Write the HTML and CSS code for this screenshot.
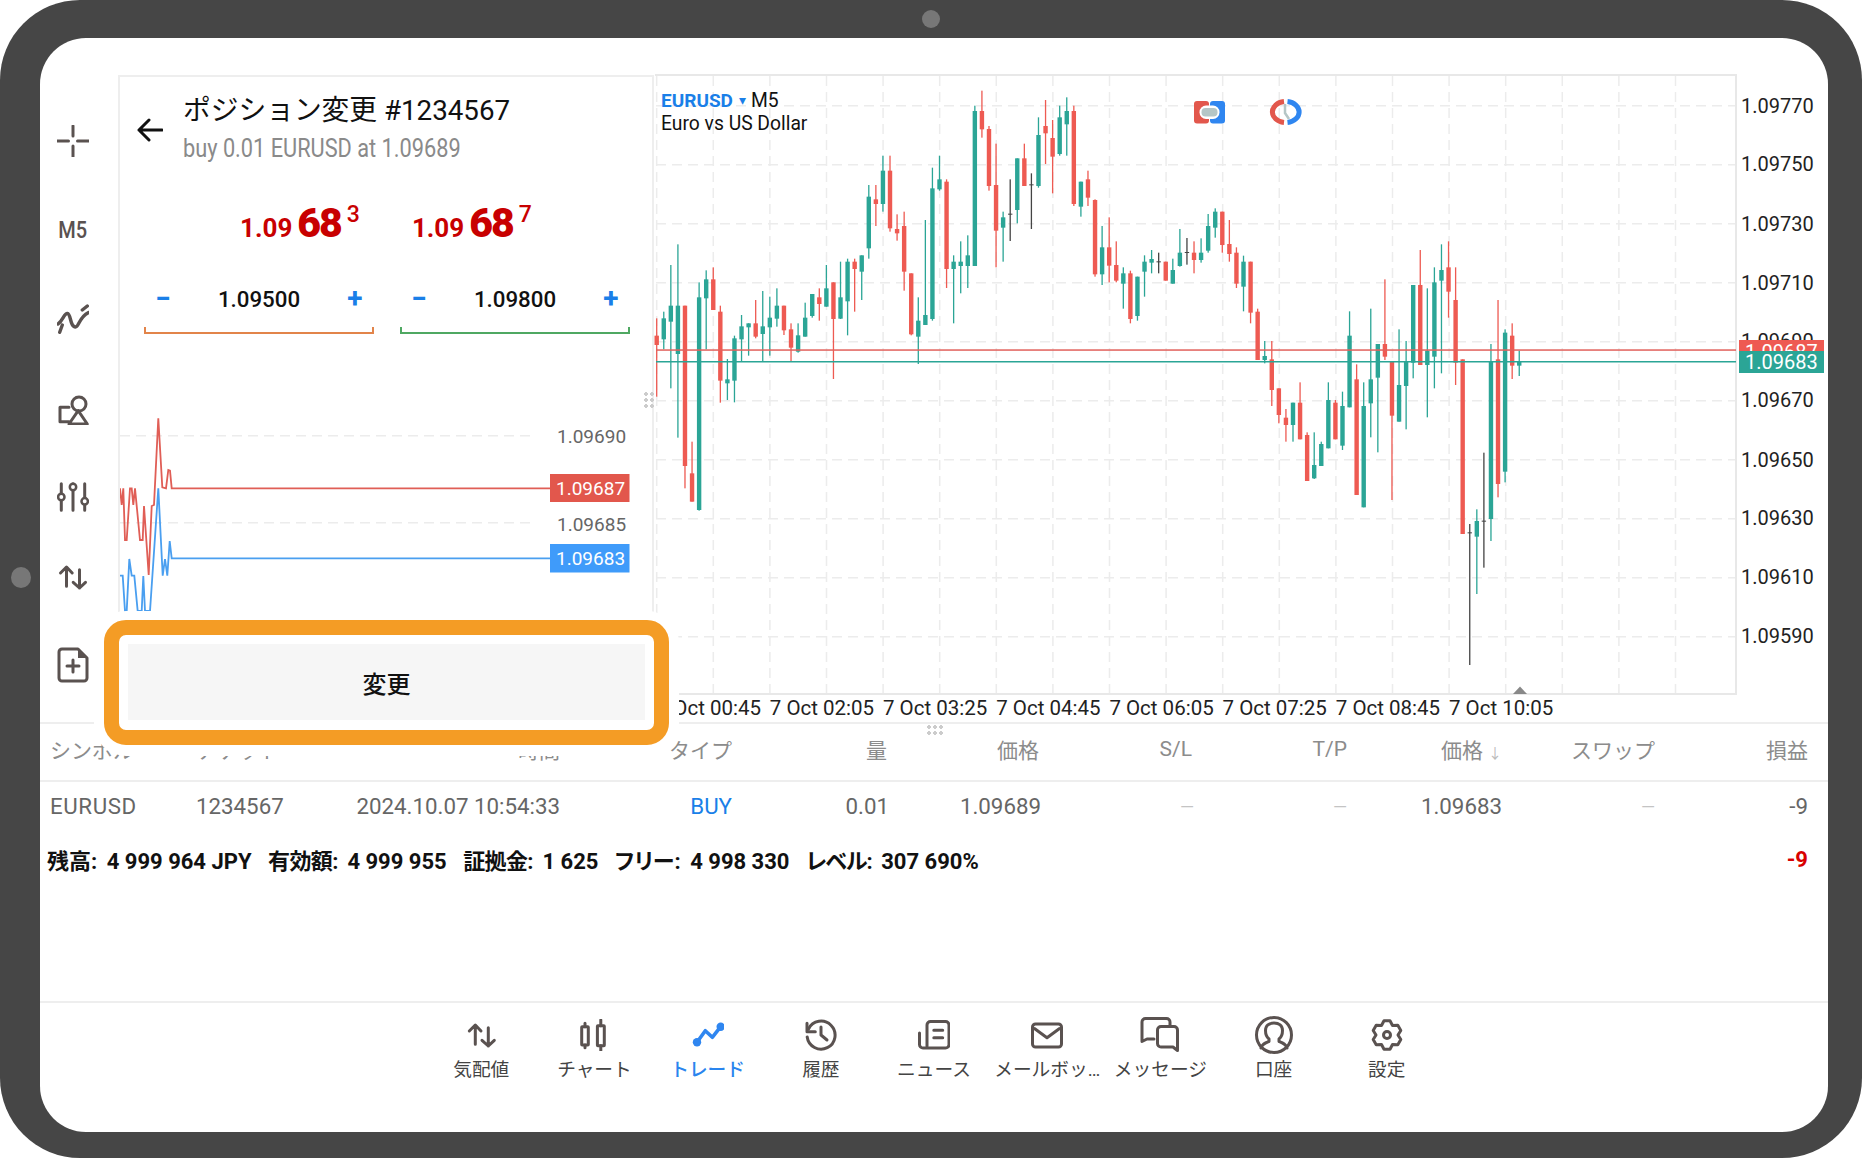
FILE: index.html
```html
<!DOCTYPE html>
<html lang="ja">
  <head>
    <meta charset="UTF-8" />
    <meta name="viewport" content="width=device-width, initial-scale=1.0" />
    <title>ポジション変更</title>
    <link rel="stylesheet" href="styles.css">
  </head>
  <body>
    <div class="tablet">
      <span class="camera"></span>
      <span class="side-dot"></span>

      <div class="screen">
        <div class="workspace">
          <nav class="rail">
            <svg class="icon" viewBox="0 0 32 32">
              <path d="M0.5 16H11.5M20.5 16H32M16 1V11M16 21V31.5" />
            </svg>
            <span class="rail-label">M5</span>
            <svg class="icon icon-bold" viewBox="0 0 32 32">
              <path d="M1 21C6 18 7 10 10.5 10.5C14 11 13 24 18.5 24C22 24 22 14 31.5 9.5M30.3 3L25.3 7M5.3 22L2.7 29.3" />
            </svg>
            <svg class="icon" viewBox="0 0 32 32">
              <circle cx="22" cy="11" r="7" />
              <path class="paper" d="M12 31H30.3L21.2 17.7Z" />
              <path d="M12 14.3H3V28.7H12" />
            </svg>
            <svg class="icon" viewBox="0 0 32 32">
              <path d="M4.3 2.7V29.3M16 2.7V29.3M27.7 2.7V29.3" />
              <circle class="knob" cx="4.3" cy="16" r="3.2" />
              <circle class="knob" cx="16" cy="6" r="3.2" />
              <circle class="knob" cx="27.7" cy="20.3" r="3.2" />
            </svg>
            <svg class="icon" viewBox="0 0 32 32">
              <path d="M9.5 25.3V7M3.5 12L9.5 6L15.2 12M22.5 8.7V27M16.2 21.3L22.5 27L28.5 21.3" />
            </svg>
            <svg class="icon icon-tall" viewBox="0 0 32 36">
              <path d="M5 2H21L30 11V31A3 3 0 0 1 27 34H5A3 3 0 0 1 2 31V5A3 3 0 0 1 5 2Z" />
              <path class="solid" d="M21 2V11H30Z" />
              <path d="M16 13V25M10 19H22" />
            </svg>
          </nav>

          <section class="panel">
            <header class="panel-head">
              <svg class="back" viewBox="0 0 26 24">
                <path d="M25 12H2M12 2L2 12L12 22" />
              </svg>
              <div>
                <h1 class="panel-title">ポジション変更 #1234567</h1>
                <p class="panel-sub">buy 0.01 EURUSD at 1.09689</p>
              </div>
            </header>

            <div class="quotes">
              <div class="quote"><span>1.09</span><b>68</b><sup>3</sup></div>
              <div class="quote"><span>1.09</span><b>68</b><sup>7</sup></div>
            </div>

            <div class="steppers">
              <div class="stepper">
                <div class="stepper-row"><span class="step">−</span><span>1.09500</span><span class="step">+</span></div>
                <div class="bracket bracket-sl"></div>
              </div>
              <div class="stepper">
                <div class="stepper-row"><span class="step">−</span><span>1.09800</span><span class="step">+</span></div>
                <div class="bracket bracket-tp"></div>
              </div>
            </div>

            <svg class="mini" viewBox="120 345 532 378">
              <path class="grid-line" d="M120 435.7H536M120 522.7H536" />
              <polyline class="tick-ask" points="118.3,505 120,488.3 121.7,505 123.3,488.3 125,540 126.7,540 130,488.3 131.7,488.3 133.3,505 135,488.3 140,540 142.7,540 144,506 148.7,575 151.7,506 154,505 158.3,418.3 162.3,487.3 166,488.3 168.3,470 170,470.7 171.7,488.3 550,488.3" />
              <polyline class="tick-bid" points="118.3,575.7 122.7,575.7 125,611 126.7,611 129.3,559 131.7,575.7 134.3,575.7 137.7,611 139.3,611 141.7,611 143.3,576 145,611 150,611 158.3,488.3 162.7,575.7 165,559 167.3,575.7 169.7,541 171.7,558.3 550,558.3" />
              <text class="mini-price" x="557" y="443">1.09690</text>
              <text class="mini-price" x="557" y="530.5">1.09685</text>
              <rect class="tag-ask" x="550" y="474" width="79.5" height="28" />
              <text class="mini-tag" x="556" y="495">1.09687</text>
              <rect class="tag-bid" x="550" y="544" width="79.5" height="28.5" />
              <text class="mini-tag" x="556" y="565">1.09683</text>
            </svg>
          </section>

          <svg id="chart" class="chart" viewBox="654 38 1174 685">
            <g id="grid" class="grid-line"></g>
            <path class="chart-frame" d="M655 75H1736V694H656" />
            <g id="candles"></g>

            <text class="sym" x="661" y="107">EURUSD</text>
            <text class="sym-caret" x="738.5" y="105">▾</text>
            <text class="chart-text" x="751" y="107">M5</text>
            <text class="chart-text" x="661" y="130">Euro vs US Dollar</text>

            <rect x="1194" y="101" width="15" height="22.5" rx="3" fill="#e2574c" />
            <rect x="1210" y="101" width="15" height="22.5" rx="3" fill="#2f86f0" />
            <rect x="1199.5" y="105.5" width="20" height="13.5" rx="6.5" fill="#fff" />
            <rect x="1201.5" y="108" width="16" height="8.5" rx="4" fill="#b5c6c6" />

            <path class="ring-red" d="M1284 101.6A13.5 10.5 0 0 0 1284 122.4" />
            <path class="ring-blue" d="M1287.5 101.6A13.5 10.5 0 0 1 1287.5 122.4" />
            <path class="ring-hand" d="M1285 104V113L1289 119" />

            <path class="axis-mark" d="M1513 694L1520 686.5L1527 694Z" />

            <text class="axis" x="1741" y="113">1.09770</text>
            <text class="axis" x="1741" y="171">1.09750</text>
            <text class="axis" x="1741" y="230.5">1.09730</text>
            <text class="axis" x="1741" y="289.5">1.09710</text>
            <text class="axis" x="1741" y="348">1.09690</text>
            <text class="axis" x="1741" y="407">1.09670</text>
            <text class="axis" x="1741" y="466.5">1.09650</text>
            <text class="axis" x="1741" y="525">1.09630</text>
            <text class="axis" x="1741" y="584">1.09610</text>
            <text class="axis" x="1741" y="642.5">1.09590</text>

            <rect x="1739" y="340" width="85" height="12" fill="#ee5a52" />
            <text class="axis-tag" x="1745" y="358.5">1.09687</text>
            <rect x="1739" y="351" width="85" height="22" fill="#2ba596" />
            <text class="axis-tag" x="1745" y="369">1.09683</text>

            <text class="time" x="656.7" y="715">7 Oct 00:45</text>
            <text class="time" x="769.8" y="715">7 Oct 02:05</text>
            <text class="time" x="883" y="715">7 Oct 03:25</text>
            <text class="time" x="996.2" y="715">7 Oct 04:45</text>
            <text class="time" x="1109.4" y="715">7 Oct 06:05</text>
            <text class="time" x="1222.6" y="715">7 Oct 07:25</text>
            <text class="time" x="1335.8" y="715">7 Oct 08:45</text>
            <text class="time" x="1449" y="715">7 Oct 10:05</text>
          </svg>
        </div>

        <section class="positions">
          <div class="cols cols-head">
            <span>シンボル</span>
            <span>チケット</span>
            <span>時間</span>
            <span>タイプ</span>
            <span>量</span>
            <span>価格</span>
            <span>S/L</span>
            <span>T/P</span>
            <span>価格<i class="sort">↓</i></span>
            <span>スワップ</span>
            <span>損益</span>
          </div>
          <div class="cols cols-row">
            <span class="sym-cell">EURUSD</span>
            <span>1234567</span>
            <span>2024.10.07 10:54:33</span>
            <span class="buy">BUY</span>
            <span>0.01</span>
            <span>1.09689</span>
            <span class="empty">—</span>
            <span class="empty">—</span>
            <span>1.09683</span>
            <span class="empty">—</span>
            <span>-9</span>
          </div>
          <div class="account">
            <span class="acc"><em>残高:</em>4 999 964 JPY</span>
            <span class="acc acc-tight"><em>有効額:</em>4 999 955</span>
            <span class="acc acc-tight"><em>証拠金:</em>1 625</span>
            <span class="acc"><em>フリー:</em>4 998 330</span>
            <span class="acc acc-tighter"><em>レベル:</em>307 690%</span>
            <span class="total">-9</span>
          </div>
        </section>

        <nav class="tabs">
          <a class="tab">
            <svg class="icon" viewBox="0 0 32 32">
              <path d="M10.3 25.3V7M4.3 12L10.3 6L16 12M23.3 8.7V27M17 21.3L23.3 27L29.3 21.3" />
            </svg>
            <span>気配値</span>
          </a>
          <a class="tab">
            <svg class="icon" viewBox="0 0 32 32">
              <rect x="3.7" y="7.7" width="6.6" height="18.3" rx="0.5" />
              <rect x="19.4" y="6.7" width="6.9" height="20" rx="0.5" />
              <path d="M7 4.3V7.7M7 26V28.7M22.8 1V6.7M22.8 26.7V31.7" />
            </svg>
            <span>チャート</span>
          </a>
          <a class="tab tab-active">
            <svg class="icon" viewBox="0 0 32 32">
              <path d="M5 23.3L13.3 11.7L20.3 18.3L28.7 7.7" />
              <circle class="solid" cx="5" cy="23.3" r="4.2" />
              <circle class="solid" cx="28.7" cy="7.7" r="4.2" />
            </svg>
            <span>トレード</span>
          </a>
          <a class="tab">
            <svg class="icon" viewBox="0 0 32 32">
              <path d="M3.5 10A14 14 0 1 1 2.2 18" />
              <path d="M2 4.3V12.7H10.3" />
              <path d="M16 8V16L22 21" />
            </svg>
            <span>履歴</span>
          </a>
          <a class="tab">
            <svg class="icon" viewBox="0 0 32 32">
              <path d="M9 27V6A3.5 3.5 0 0 1 12.5 2.5H27.5A3.5 3.5 0 0 1 31 6V25.5A3.5 3.5 0 0 1 27.5 29H5A3.5 3.5 0 0 1 1.5 25.5V14" />
              <path d="M15.8 11.3H24.7M15.8 18.7H24.7" />
            </svg>
            <span>ニュース</span>
          </a>
          <a class="tab">
            <svg class="icon" viewBox="0 0 32 32">
              <rect x="1.5" y="5" width="29" height="23" rx="3" />
              <path d="M3.8 9.7L16 18.7L28.2 9.7" />
            </svg>
            <span>メールボッ…</span>
          </a>
          <a class="tab">
            <svg class="icon icon-wide" viewBox="0 0 40 40">
              <path d="M30 11V7A3.5 3.5 0 0 0 26.5 3.5H5.5A3.5 3.5 0 0 0 2 7V26.5L7 24H14" />
              <path d="M21 11.5H34A3.5 3.5 0 0 1 37.5 15V35.5L33 32H21A3.5 3.5 0 0 1 17.5 28.5V15A3.5 3.5 0 0 1 21 11.5Z" />
            </svg>
            <span>メッセージ</span>
          </a>
          <a class="tab">
            <svg class="icon icon-wide" viewBox="0 0 40 40">
              <circle cx="20" cy="20" r="17.5" />
              <path d="M7 33C8 29 11 28 15 26.5V24C12.5 22 11.5 19 11.5 15.5C11.5 10.5 15 8 20 8C25 8 28.5 10.5 28.5 15.5C28.5 19 27.5 22 25 24V26.5C29 28 32 29 33 33" />
            </svg>
            <span>口座</span>
          </a>
          <a class="tab">
            <svg class="icon" viewBox="0 0 32 32">
              <path d="M13 1.8H19L21.5 6.5L26.8 6.3L29.8 11.5L27 16L29.8 20.5L26.8 25.7L21.5 25.5L19 30.2H13L10.5 25.5L5.2 25.7L2.2 20.5L5 16L2.2 11.5L5.2 6.3L10.5 6.5Z" />
              <circle cx="16" cy="16" r="3.5" />
            </svg>
            <span>設定</span>
          </a>
        </nav>

        <span class="grip grip-v"></span>
        <span class="grip grip-h"></span>
      </div>

      <div class="highlight">
        <button class="modify" type="button">変更</button>
      </div>
    </div>

    <script src="chart.js"></script>
  </body>
</html>
```

FILE: styles.css
```css
* {
  box-sizing: border-box;
}
body {
  margin: 0;
  background: #fff;
  font-family: Roboto, "Noto Sans CJK JP", sans-serif;
  color: #111;
}
.tablet {
  position: relative;
  width: 1862px;
  height: 1158px;
  padding: 38px 34px 26px 40px;
  background: #464646;
  border-radius: 80px;
}
.camera {
  position: absolute;
  left: 922px;
  top: 10px;
  width: 18px;
  height: 18px;
  border-radius: 50%;
  background: #777;
}
.side-dot {
  position: absolute;
  left: 11px;
  top: 567px;
  width: 20px;
  height: 21px;
  border-radius: 50%;
  background: #777;
}
.screen {
  position: relative;
  display: flex;
  flex-direction: column;
  height: 1094px;
  background: #fff;
  border-radius: 46px;
  overflow: hidden;
}

/* top area: tool rail, order panel, chart */
.workspace {
  display: flex;
  height: 686px;
  flex: none;
  border-bottom: 2px solid #eee;
}
.rail {
  display: grid;
  grid-template-rows: 88px 90px 88px 92px 84px 76px 100px;
  justify-items: center;
  align-items: center;
  width: 78px;
  padding: 59px 13px 0 0;
  flex: none;
}
.rail-label {
  font-size: 23px;
  font-weight: 500;
  color: #5a5250;
  transform: scaleX(0.87);
}
.icon {
  display: block;
  width: 32px;
  height: 32px;
  fill: none;
  stroke: #5a5250;
  stroke-width: 3;
  stroke-linecap: round;
  stroke-linejoin: round;
}
.icon-bold {
  stroke-width: 3.4;
}
.icon-tall {
  height: 36px;
}
.icon-wide {
  width: 40px;
  height: 40px;
}
.knob {
  fill: #fff;
  stroke-width: 2.5;
}
.paper {
  fill: #fff;
}
.solid {
  fill: #5a5250;
  stroke: none;
}

.panel {
  width: 536px;
  flex: none;
  margin-top: 37px;
  border: 2px solid #eee;
  border-bottom: none;
}
.panel-head {
  display: flex;
  align-items: center;
  gap: 20px;
  padding: 15px 0 0 17px;
}
.back {
  width: 26px;
  height: 24px;
  fill: none;
  stroke: #111;
  stroke-width: 3;
  stroke-linecap: round;
  stroke-linejoin: round;
}
.panel-title {
  margin: 0;
  font-size: 28px;
  font-weight: 400;
  line-height: 38px;
  white-space: nowrap;
  transform: scaleX(0.99);
  transform-origin: left;
}
.panel-sub {
  margin: 0;
  font-size: 25px;
  line-height: 37px;
  color: #8a8a8a;
  white-space: nowrap;
  transform: scaleX(0.87);
  transform-origin: left;
}
.quotes {
  display: flex;
  gap: 52px;
  height: 50px;
  margin-top: 31px;
  padding-left: 120px;
  color: #c80000;
  font-weight: 700;
}
.quote {
  display: flex;
  align-items: baseline;
  line-height: 50px;
  font-size: 26px;
}
.quote b {
  margin-left: 5px;
  font-size: 41px;
  letter-spacing: -2px;
}
.quote sup {
  margin-left: 6px;
  font-size: 23px;
  font-weight: 500;
  line-height: 1;
  align-self: flex-start;
  margin-top: 5px;
}
.steppers {
  display: flex;
  gap: 26px;
  margin-top: 30px;
  margin-bottom: 11px;
  padding-left: 24px;
}
.stepper {
  width: 230px;
}
.stepper-row {
  display: flex;
  justify-content: space-between;
  align-items: center;
  height: 49px;
  padding: 0 10px 8px;
  font-size: 22.3px;
  font-weight: 500;
}
.step {
  width: 18px;
  text-align: center;
  font-size: 28px;
  font-weight: 700;
  color: #1a7fe8;
}
.bracket {
  height: 7px;
  border: 2px solid;
  border-top: none;
}
.bracket-sl {
  border-color: #e2844a;
}
.bracket-tp {
  border-color: #4fa862;
}

.mini {
  display: block;
  width: 532px;
  height: 378px;
}
.grid-line {
  fill: none;
  stroke: #ececec;
  stroke-width: 1.5;
  stroke-dasharray: 10 6;
}
.tick-ask,
.tick-bid {
  fill: none;
  stroke-width: 1.8;
}
.tick-ask {
  stroke: #e05e56;
}
.tick-bid {
  stroke: #4a9ff0;
}
.mini-price {
  font-size: 19px;
  fill: #666;
}
.mini-tag {
  font-size: 19px;
  fill: #fff;
}
.tag-ask {
  fill: #e2574c;
}
.tag-bid {
  fill: #3f9bfa;
}

.chart {
  display: block;
  width: 1174px;
  height: 685px;
  flex: none;
}
.chart-frame {
  fill: none;
  stroke: #e8e8e8;
  stroke-width: 2;
}
.sym {
  font-size: 19px;
  font-weight: 700;
  fill: #1a7fe8;
}
.sym-caret {
  font-size: 14px;
  fill: #1a7fe8;
}
.chart-text {
  font-size: 19.3px;
  fill: #111;
}
.ring-red,
.ring-blue {
  fill: none;
  stroke-width: 5;
}
.ring-red {
  stroke: #e2574c;
}
.ring-blue {
  stroke: #2f86f0;
}
.ring-hand {
  fill: none;
  stroke: #b5c6c6;
  stroke-width: 2.5;
}
.axis-mark {
  fill: #888;
}
.axis {
  font-size: 20px;
  fill: #222;
}
.axis-tag {
  font-size: 20px;
  fill: #fff;
}
.time {
  font-size: 20.5px;
  fill: #222;
}

/* positions table */
.positions {
  flex: none;
  height: 277px;
  font-size: 22.3px;
}
.cols {
  display: grid;
  grid-template-columns: 146px 120px 244px 172px 157px 152px 153px 153px 155px 153px 153px;
  padding-left: 10px;
  white-space: nowrap;
}
.cols span:nth-child(n + 3) {
  text-align: right;
}
.cols-head {
  height: 58px;
  padding-bottom: 6px;
  align-items: center;
  font-size: 21px;
  color: #8c8c8c;
  border-bottom: 2px solid #eee;
}
.cols-head span:nth-child(n + 5):nth-child(-n + 7) {
  padding-right: 2px;
}
.sort {
  margin-left: 5px;
  font-size: 14px;
  font-style: normal;
  color: #bbb;
}
.cols-row {
  height: 48px;
  align-items: center;
  color: #666;
}
.sym-cell {
  letter-spacing: 0.6px;
}
.buy {
  color: #1a7fe8;
}
.empty {
  color: #c4c4c4;
  font-size: 18px;
}
.account {
  display: flex;
  gap: 16.5px;
  align-items: center;
  height: 58px;
  padding: 0 20px 0 7px;
  font-size: 22px;
  font-weight: 700;
  font-feature-settings: "palt";
  white-space: nowrap;
}
.acc em {
  margin-right: 9.5px;
  font-style: normal;
}
.acc-tight em {
  letter-spacing: -0.6px;
}
.acc-tighter em {
  letter-spacing: -1px;
}
.total {
  margin-left: auto;
  color: #d80000;
}

/* bottom tabs */
.tabs {
  display: flex;
  justify-content: center;
  flex: 1;
  padding-top: 12px;
  border-top: 2px solid #eee;
}
.tab {
  display: flex;
  flex-direction: column;
  align-items: center;
  width: 113.2px;
  font-size: 18.7px;
  color: #444;
  white-space: nowrap;
}
.tab .icon {
  margin: 4px 0;
}
.tab .icon-wide {
  margin: 0;
}
.tab span {
  margin-top: 4px;
  line-height: 22px;
}
.tab-active {
  color: #2a85ee;
  font-weight: 500;
}
.tab-active .icon {
  stroke: #2f86f0;
  stroke-width: 3.6;
}
.tab-active .solid {
  fill: #2f86f0;
}

.grip {
  position: absolute;
  background-image: radial-gradient(circle, #ccc 1.6px, transparent 2px);
  background-size: 6px 6px;
}
.grip-v {
  left: 603px;
  top: 353px;
  width: 12px;
  height: 18px;
}
.grip-h {
  left: 886px;
  top: 686px;
  width: 18px;
  height: 12px;
}

/* orange callout round the submit button */
.highlight {
  position: absolute;
  left: 104px;
  top: 620px;
  width: 565px;
  height: 125px;
  padding: 9px 9px 10px;
  background: #fff;
  border: 15px solid #f49c25;
  border-radius: 22px;
  box-shadow: 0 1px 0 10px #fff;
}
.modify {
  display: block;
  width: 100%;
  height: 100%;
  padding: 0;
  border: none;
  background: #f6f6f6;
  font-family: inherit;
  font-size: 24px;
  font-weight: 500;
  color: #111;
}
```

FILE: chart.js
```js
// y values are in 1/3 px, measured from y = 70
const Y = (v) => 70 + v / 3;
const STEP = 7.07;
const FIRST_X = 656.7;
const COLORS = { g: "#2ba596", r: "#ee5a52", d: "#444" };

// colour, wick top, body top, body bottom, wick bottom
const candles = [
  ["r", 745, 797, 825, 980], ["g", 725, 745, 808, 838], ["g", 585, 707, 755, 955],
  ["g", 523, 707, 852, 1103], ["r", 707, 707, 1188, 1255], ["r", 1115, 1210, 1295, 1295],
  ["g", 637, 682, 1320, 1322], ["g", 601, 628, 685, 838], ["r", 592, 628, 720, 720],
  ["r", 707, 725, 932, 998], ["g", 867, 928, 940, 990], ["g", 797, 805, 932, 997],
  ["g", 735, 769, 808, 875], ["g", 760, 760, 772, 857], ["r", 690, 760, 800, 805],
  ["g", 663, 769, 792, 875], ["g", 680, 743, 772, 857], ["g", 655, 707, 746, 770],
  ["r", 707, 707, 781, 795], ["r", 760, 778, 833, 875], ["g", 760, 796, 845, 848],
  ["g", 698, 743, 800, 800], ["g", 672, 672, 738, 743], ["r", 655, 682, 702, 752],
  ["g", 585, 655, 710, 710], ["r", 637, 637, 747, 927], ["g", 575, 682, 746, 747],
  ["g", 566, 575, 694, 796], ["r", 566, 575, 597, 725], ["g", 556, 556, 605, 690],
  ["g", 345, 380, 535, 566], ["r", 345, 388, 402, 468], ["g", 257, 302, 402, 425],
  ["r", 257, 302, 475, 485], ["r", 433, 477, 490, 512], ["r", 425, 468, 605, 662],
  ["r", 610, 610, 793, 796], ["g", 682, 752, 800, 882], ["g", 450, 735, 765, 765],
  ["g", 293, 355, 747, 752], ["g", 257, 328, 358, 362], ["r", 328, 335, 597, 654],
  ["g", 556, 575, 597, 760], ["g", 514, 575, 588, 670], ["g", 496, 556, 588, 654],
  ["g", 107, 123, 588, 588], ["r", 62, 123, 178, 203], ["r", 168, 177, 348, 362],
  ["r", 221, 345, 482, 592], ["g", 425, 442, 473, 575], ["d", 328, 431, 434, 513],
  ["g", 265, 265, 420, 460], ["r", 221, 265, 348, 348], ["d", 310, 343, 346, 477],
  ["g", 142, 195, 348, 353], ["r", 90, 168, 190, 282], ["r", 150, 204, 260, 370],
  ["g", 107, 142, 252, 257], ["g", 82, 123, 163, 257], ["r", 107, 123, 402, 408],
  ["g", 335, 335, 410, 440], ["r", 302, 328, 383, 408], ["r", 388, 390, 613, 620],
  ["g", 468, 532, 613, 645], ["r", 442, 532, 587, 637], ["r", 514, 585, 632, 637],
  ["g", 592, 610, 641, 716], ["r", 602, 610, 747, 760], ["g", 620, 620, 738, 752],
  ["g", 556, 575, 605, 680], ["g", 540, 567, 578, 610], ["d", 548, 574, 577, 610],
  ["r", 575, 575, 632, 632], ["g", 566, 600, 641, 641], ["g", 477, 548, 588, 590],
  ["d", 504, 546, 549, 584], ["r", 514, 548, 570, 610], ["g", 505, 548, 570, 578],
  ["g", 432, 468, 542, 548], ["g", 415, 425, 473, 503], ["r", 425, 425, 525, 548],
  ["r", 450, 522, 552, 575], ["r", 532, 548, 641, 654], ["g", 557, 575, 650, 724],
  ["r", 575, 575, 728, 760], ["r", 716, 725, 870, 870], ["g", 813, 858, 870, 880],
  ["r", 813, 868, 960, 1008], ["r", 955, 955, 1035, 1060], ["r", 1017, 1043, 1065, 1115],
  ["g", 998, 998, 1065, 1115], ["r", 937, 998, 1108, 1108], ["r", 1087, 1095, 1233, 1233],
  ["g", 1087, 1185, 1225, 1227], ["g", 1115, 1122, 1188, 1188], ["g", 937, 990, 1135, 1135],
  ["r", 990, 998, 1108, 1108], ["g", 965, 1008, 1127, 1140], ["g", 724, 797, 1012, 1012],
  ["r", 883, 928, 1275, 1275], ["g", 937, 1008, 1312, 1312], ["g", 716, 928, 1000, 1102],
  ["g", 822, 822, 923, 1147], ["r", 628, 822, 860, 870], ["r", 875, 875, 1037, 1290],
  ["g", 778, 945, 1055, 1055], ["g", 813, 875, 948, 1078], ["g", 645, 645, 878, 925],
  ["r", 540, 645, 885, 885], ["g", 655, 842, 885, 1042], ["g", 592, 637, 860, 955],
  ["g", 523, 600, 632, 910], ["r", 514, 592, 665, 743], ["r", 592, 690, 878, 945],
  ["r", 868, 868, 1392, 1392], ["d", 1362, 1387, 1390, 1785], ["g", 1318, 1353, 1400, 1572],
  ["d", 1148, 1352, 1355, 1493], ["g", 822, 875, 1347, 1413], ["r", 690, 868, 1242, 1282],
  ["g", 778, 788, 1205, 1237], ["r", 760, 797, 887, 927], ["g", 842, 875, 887, 918],
];

const NS = "http://www.w3.org/2000/svg";

function addRect(parent, x, y, w, h, fill) {
  const rect = document.createElementNS(NS, "rect");
  rect.setAttribute("x", x);
  rect.setAttribute("y", y);
  rect.setAttribute("width", w);
  rect.setAttribute("height", h);
  rect.setAttribute("fill", fill);
  parent.appendChild(rect);
}

function drawCandles() {
  const group = document.getElementById("candles");
  candles.forEach(([color, hi, top, bottom, lo], i) => {
    const x = FIRST_X + STEP * i;
    const fill = COLORS[color];
    addRect(group, x - 0.65, Y(hi), 1.3, Y(lo) - Y(hi), fill);
    addRect(group, x - 2.2, Y(top), 4.4, Math.max(Y(bottom) - Y(top), 1), fill);
  });
  addRect(group, 656, 349.3, 1080, 1.5, "#e2625c");
  addRect(group, 656, 361, 1080, 1.5, "#2ba596");
}

function drawGrid() {
  const grid = document.getElementById("grid");
  let d = "";
  for (let i = 0; i < 10; i++) {
    d += `M656 ${105.7 + 59 * i}H1736`;
  }
  for (let i = 0; i < 19; i++) {
    d += `M${656.7 + 56.6 * i} 76V694`;
  }
  const path = document.createElementNS(NS, "path");
  path.setAttribute("d", d);
  grid.appendChild(path);
}

drawGrid();
drawCandles();
```
